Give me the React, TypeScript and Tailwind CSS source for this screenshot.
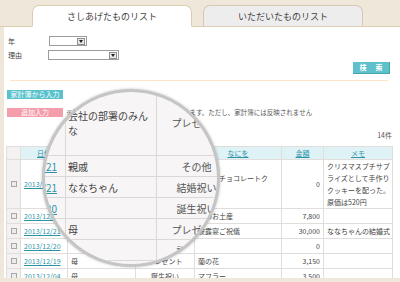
import React from "react";

type Row = {
  date: string;
  name: string;
  reason: string;
  what: string[];
  amount: string;
  memo: string[];
};

const rows: Row[] = [
  {
    date: "2013/12/24",
    name: "会社の部署のみんな",
    reason: "プレゼント",
    what: ["手作りチョコレートク", "ッキー"],
    amount: "0",
    memo: ["クリスマスプチサプ", "ライズとして手作り", "クッキーを配った。", "原価は520円"],
  },
  { date: "2013/12/21", name: "親戚", reason: "その他", what: ["旅のお土産"], amount: "7,800", memo: [] },
  { date: "2013/12/21", name: "ななちゃん", reason: "結婚祝い", what: ["披露宴ご祝儀"], amount: "30,000", memo: ["ななちゃんの結婚式"] },
  { date: "2013/12/20", name: "", reason: "誕生祝い", what: [], amount: "0", memo: [] },
  { date: "2013/12/19", name: "母", reason: "プレゼント", what: ["蘭の花"], amount: "3,150", memo: [] },
  { date: "2013/12/04", name: "母", reason: "誕生祝い", what: ["マフラー"], amount: "3,500", memo: [] },
];

function Select({ className }: { className: string }) {
  return (
    <div className={`h-[10px] ${className} border border-[#9c9c9c] bg-white flex items-center justify-end pr-[1px]`}>
      <div className="w-[8px] h-[7px] bg-[#e6e6e6] border border-[#8f8f8f] flex items-center justify-center">
        <svg width="4" height="3" viewBox="0 0 4 3">
          <path d="M0 0H4L2 3Z" fill="#222" />
        </svg>
      </div>
    </div>
  );
}

const cell = "border border-[#e1dddd] px-[3px] align-middle";
const hdr = "border border-[#e1dddd] bg-[#dff2f5] font-normal text-[#2d94a8] underline align-middle";

export default function App() {
  return (
    <div className="relative w-[400px] h-[282px] overflow-hidden bg-[#efe7d9] font-['Noto_Sans_CJK_JP',sans-serif] text-[#555]">
      {/* tabs */}
      <div className="h-[27px] flex items-end pl-[32px] border-b border-[#dccdb2]">
        <div className="-mb-px h-[22px] w-[160px] rounded-t-[7px] border border-[#dccdb2] border-b-white bg-white flex items-center justify-center text-[9px] leading-none text-[#444]">
          さしあげたものリスト
        </div>
        <div className="ml-[11px] h-[21px] w-[160px] rounded-t-[7px] border border-b-0 border-[#d5c9b5] bg-[#ededed] flex items-center justify-center text-[9px] leading-none text-[#444]">
          いただいたものリスト
        </div>
      </div>

      {/* panel */}
      <div className="pl-[4px]">
        <div className="h-[251px] overflow-hidden bg-white pl-[2px] pr-[8px] flex flex-col">
          <div className="mt-[9px] ml-[2px] flex items-center shrink-0">
            <span className="w-[41px] text-[7px] leading-[10px] text-[#444]">年</span>
            <Select className="w-[38px]" />
          </div>
          <div className="mt-[4px] ml-[2px] flex items-center shrink-0">
            <span className="w-[40px] text-[7px] leading-[10px] text-[#444]">理由</span>
            <Select className="w-[71px]" />
          </div>
          <div className="mt-[2px] flex justify-end pr-[2px] shrink-0">
            <div className="h-[12px] w-[37px] bg-[#5ec0ca] border-r border-b border-[#45a6b0] flex items-center justify-center gap-[9px] text-[7px] font-bold text-white leading-none">
              <span>検</span>
              <span>索</span>
            </div>
          </div>
          <div className="mt-[6px] mx-[4px] h-px shrink-0 bg-[#fde4c6]" />
          <div className="mt-[9px] ml-[1px] h-[9px] shrink-0 w-[56px] bg-[#59c2cd] text-white text-[7px] flex items-center justify-center leading-none whitespace-nowrap">
            家計簿から入力
          </div>
          <div className="mt-[9px] ml-[1px] flex items-center h-[9px] shrink-0">
            <div className="h-[9px] w-[56px] bg-[#f49dab] text-white text-[7px] flex items-center justify-center leading-none">
              追加入力
            </div>
            <span className="ml-[3px] text-[6.5px] leading-none whitespace-nowrap">
              ※手入力したものはリストに追加表示されます。ただし、家計簿には反映されません
            </span>
          </div>
          <div className="mt-[14px] h-[8px] shrink-0 text-right text-[7px] leading-[8px]">14件</div>
          <table className="mt-[7px] table-fixed w-[386px] shrink-0 border-collapse text-[7px] leading-[12px]">
            <colgroup>
              <col className="w-[14px]" />
              <col className="w-[47px]" />
              <col className="w-[68px]" />
              <col className="w-[59px]" />
              <col className="w-[87px]" />
              <col className="w-[42px]" />
              <col className="w-[69px]" />
            </colgroup>
            <thead>
              <tr className="h-[13px]">
                <th className="border border-[#e1dddd] bg-[#f4f2f1]" />
                <th className={hdr}>日付</th>
                <th className={hdr}>だれに</th>
                <th className={hdr}>理由</th>
                <th className={hdr}>なにを</th>
                <th className={hdr}>金額</th>
                <th className={hdr}>メモ</th>
              </tr>
            </thead>
            <tbody>
              {rows.map((r, i) => (
                <tr key={i} className={i === 0 ? "h-[49px]" : "h-[15px]"}>
                  <td className="border border-[#e1dddd] bg-[#f4f2f1] align-middle">
                    <div className="mx-auto w-[6px] h-[6px] border border-[#a8a8a8] bg-[#ececec]" />
                  </td>
                  <td className={`${cell} text-[#2d94a8] underline whitespace-nowrap`}>{r.date}</td>
                  <td className={`${cell} text-[#444]`}>{r.name}</td>
                  <td className={`${cell} text-center text-[#444]`}>{r.reason}</td>
                  <td className={`${cell} text-[#444]`}>
                    {r.what.map((w, j) => (
                      <div key={j}>{w}</div>
                    ))}
                  </td>
                  <td className={`${cell} text-right text-[#444]`}>{r.amount}</td>
                  <td className={`${cell} text-[#444] px-[2px]`}>
                    {r.memo.map((m, j) => (
                      <div key={j} className="whitespace-nowrap">{m}</div>
                    ))}
                  </td>
                </tr>
              ))}
            </tbody>
          </table>
        </div>
      </div>

      {/* magnifier lens */}
      <div className="absolute left-[42px] top-[89px] w-[178px] h-[178px] rounded-full border-[3px] border-[#c5c5c5] bg-[#f7f5f5] overflow-hidden shadow-[0_0_3px_rgba(0,0,0,0.25)]">
        <div className="absolute left-[-45px] top-[-2px] w-[300px] text-[10px] leading-[15px] text-[#444]">
          {rows.map((r, i) => (
            <div key={i} className={`flex border-b border-[#dcd8d8] ${i === 0 ? "h-[66px]" : "h-[21px]"}`}>
              <div className="w-[66px] shrink-0 border-r border-[#dcd8d8] flex items-center justify-end pr-[8px] text-[#2d94a8] underline whitespace-nowrap">
                {r.date}
              </div>
              <div className="w-[91px] shrink-0 border-r border-[#dcd8d8] flex items-center pl-[2px]">
                {i === 0 ? (
                  <span>
                    会社の部署のみん
                    <br />な
                  </span>
                ) : (
                  r.name
                )}
              </div>
              <div className="w-[80px] shrink-0 border-r border-[#dcd8d8] flex items-center justify-center text-[#555]">
                {r.reason}
              </div>
              <div className="flex-1" />
            </div>
          ))}
        </div>
      </div>
    </div>
  );
}
